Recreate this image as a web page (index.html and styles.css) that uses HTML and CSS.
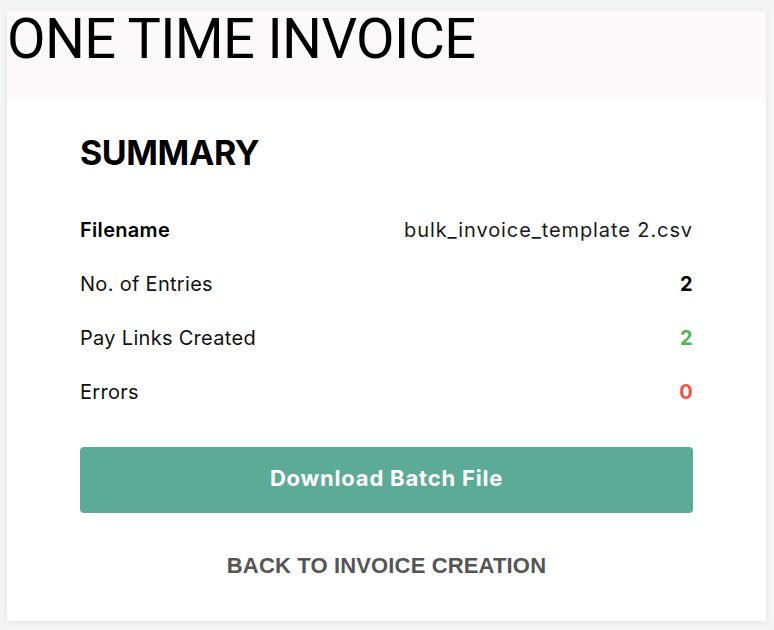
FILE: index.html
```html
<!DOCTYPE html>
<html lang="en">
<head>
<meta charset="utf-8">
<title>One Time Invoice</title>
<link rel="stylesheet" href="styles.css">
</head>
<body>
<div class="shell">
  <header class="page-head">
    <h1 class="page-title">ONE TIME INVOICE</h1>
  </header>
  <main class="card">
    <h2 class="card-title">SUMMARY</h2>
    <div class="rows">
      <div class="row">
        <span class="label label-strong">Filename</span>
        <span class="value value-file">bulk_invoice_template 2.csv</span>
      </div>
      <div class="row">
        <span class="label">No. of Entries</span>
        <span class="value value-num">2</span>
      </div>
      <div class="row">
        <span class="label">Pay Links Created</span>
        <span class="value value-num value-ok">2</span>
      </div>
      <div class="row">
        <span class="label">Errors</span>
        <span class="value value-num value-err">0</span>
      </div>
    </div>
    <button class="btn-primary" type="button">Download Batch File</button>
    <a class="back-link" href="#">BACK TO INVOICE CREATION</a>
  </main>
</div>
</body>
</html>
```

FILE: styles.css
```css
html, body {
  margin: 0;
  padding: 0;
}

body {
  background: #f6f5f6;
  font-family: "Inter", "Liberation Sans", sans-serif;
  color: #111;
  padding: 11px 8px 9px 7px;
}

.shell {
  background: #fbf9fa;
  box-shadow: 0 1px 8px rgba(0, 0, 0, 0.08);
}

.page-head {
  height: 86px;
}

.page-title {
  margin: 0;
  font-family: "Roboto", "Liberation Sans", sans-serif;
  font-weight: 400;
  font-size: 56px;
  line-height: 56px;
  color: #000;
  letter-spacing: -0.65px;
}

.card {
  background: #fff;
  border-radius: 8px 8px 0 0;
  padding: 34px 73px 43px;
  display: flex;
  flex-direction: column;
}

.card-title {
  margin: 0;
  font-size: 34px;
  font-weight: 700;
  line-height: 44px;
  letter-spacing: -0.4px;
  color: #000;
}

.rows {
  margin-top: 28px;
}

.row {
  display: flex;
  justify-content: space-between;
  align-items: center;
  padding: 15px 0;
  font-size: 20px;
  line-height: 24px;
  letter-spacing: 0.3px;
}

.label {
  color: #111;
}

.label-strong {
  font-weight: 600;
  color: #000;
}

.value-file {
  color: #1a1a1a;
  letter-spacing: 0.9px;
}

.value-num {
  font-weight: 700;
  color: #000;
}

.value-ok {
  color: #4fb653;
}

.value-err {
  color: #ec5549;
}

.btn-primary {
  margin-top: 28px;
  height: 66px;
  border: none;
  border-radius: 4px;
  background: #5cab97;
  color: #fff;
  font-family: "Inter", "Liberation Sans", sans-serif;
  font-size: 22px;
  font-weight: 700;
  letter-spacing: 0.8px;
  display: flex;
  align-items: center;
  justify-content: center;
  padding: 0 0 5px;
}

.back-link {
  margin-top: 41px;
  align-self: center;
  font-family: "Liberation Sans", Arial, sans-serif;
  font-weight: 700;
  font-size: 22px;
  line-height: 24px;
  letter-spacing: 0.15px;
  color: #555;
  text-decoration: none;
}
```
